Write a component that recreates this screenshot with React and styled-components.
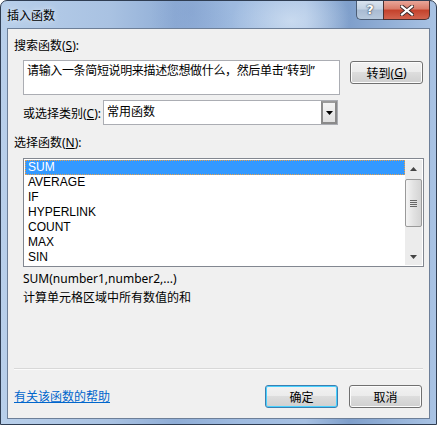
import React from 'react'
import styled, { createGlobalStyle } from 'styled-components'

const GlobalStyle = createGlobalStyle`
    html, body {
        margin: 0;
        padding: 0;
        background: #ffffff;
    }
    body {
        font-family: "Noto Sans", "Noto Sans CJK SC", sans-serif;
        font-size: 12px;
        color: #000;
    }
`

const functions = ['SUM', 'AVERAGE', 'IF', 'HYPERLINK', 'COUNT', 'MAX', 'SIN']

const Key = ({ children }) => <u>{children}</u>

const App = () => {
    return (
        <>
            <GlobalStyle />
            <Window>
                <TitleBar>
                    <Title>插入函数</Title>
                    <Caption>
                        <HelpButton>?</HelpButton>
                        <CloseButton>
                            <svg width="14" height="11" viewBox="0 0 14 11">
                                <path d="M2 1.5 L12 9.5 M12 1.5 L2 9.5" stroke="#3a2a2a" strokeWidth="4" strokeLinecap="square" />
                                <path d="M2 1.5 L12 9.5 M12 1.5 L2 9.5" stroke="#ffffff" strokeWidth="2.2" strokeLinecap="square" />
                            </svg>
                        </CloseButton>
                    </Caption>
                </TitleBar>
                <Client>
                    <Label>搜索函数(<Key>S</Key>):</Label>
                    <SearchRow>
                        <SearchBox>请输入一条简短说明来描述您想做什么，然后单击“转到”</SearchBox>
                        <Button>转到(<Key>G</Key>)</Button>
                    </SearchRow>
                    <CategoryRow>
                        <span>或选择类别(<Key>C</Key>):</span>
                        <Select>
                            <SelectText>常用函数</SelectText>
                            <DropButton>
                                <svg width="7" height="4" viewBox="0 0 7 4">
                                    <path d="M0 0 H7 L3.5 4 Z" fill="#000" />
                                </svg>
                            </DropButton>
                        </Select>
                    </CategoryRow>
                    <Label gap={10}>选择函数(<Key>N</Key>):</Label>
                    <ListBox>
                        <Items>
                            {functions.map((f, i) => (
                                <Item key={f} selected={i === 0}>{f}</Item>
                            ))}
                        </Items>
                        <ScrollBar>
                            <Arrow>
                                <svg width="7" height="4" viewBox="0 0 7 4"><path d="M0 4 H7 L3.5 0 Z" fill="#444" /></svg>
                            </Arrow>
                            <Track>
                                <Thumb>
                                    <Grip /><Grip /><Grip /><Grip />
                                </Thumb>
                            </Track>
                            <Arrow>
                                <svg width="7" height="4" viewBox="0 0 7 4"><path d="M0 0 H7 L3.5 4 Z" fill="#444" /></svg>
                            </Arrow>
                        </ScrollBar>
                    </ListBox>
                    <Syntax>SUM(number1,number2,...)</Syntax>
                    <Description>计算单元格区域中所有数值的和</Description>
                    <Separator />
                    <Footer>
                        <HelpLink href="#">有关该函数的帮助</HelpLink>
                        <Buttons>
                            <Button primary>确定</Button>
                            <Button>取消</Button>
                        </Buttons>
                    </Footer>
                </Client>
            </Window>
        </>
    )
}

export default App

const Window = styled.div`
    width: 437px;
    height: 425px;
    box-sizing: border-box;
    border: 1px solid #2f3d52;
    border-radius: 7px 7px 0 0;
    padding: 0 6px 5px 6px;
    display: flex;
    flex-direction: column;
    background:
        radial-gradient(ellipse 60px 40px at 290px 20px, rgba(230,240,250,0.55), rgba(230,240,250,0) 100%),
        radial-gradient(ellipse 40px 60px at 190px 10px, rgba(120,150,200,0.35), rgba(120,150,200,0) 100%),
        linear-gradient(90deg, #b8cfea 0%, #a9c2e2 25%, #8fadd6 40%, #9fbbe0 55%, #a6c0e2 70%, #7f9fcb 80%, #a9c3e4 100%);
    overflow: hidden;
`

const TitleBar = styled.div`
    height: 27px;
    display: flex;
    align-items: flex-start;
    justify-content: space-between;
`

const Title = styled.div`
    margin-top: 5px;
    font-family: "Noto Sans CJK SC", sans-serif;
    font-size: 12px;
    color: #000;
    text-shadow: 0 0 6px rgba(255,255,255,0.9);
`

const Caption = styled.div`
    display: flex;
`

const HelpButton = styled.div`
    width: 27px;
    height: 19px;
    box-sizing: border-box;
    border: 1px solid #4b5c74;
    border-top: none;
    border-right: none;
    border-radius: 0 0 0 5px;
    background: linear-gradient(#d9e3ef 0%, #c4d2e3 45%, #a9bbd2 50%, #b8c9dd 100%);
    color: #fff;
    font-family: "DejaVu Sans", sans-serif;
    font-weight: bold;
    font-size: 13px;
    line-height: 18px;
    text-align: center;
    text-shadow: 0 0 2px #2a3548, 0 0 1px #2a3548;
`

const CloseButton = styled.div`
    width: 47px;
    height: 19px;
    box-sizing: border-box;
    border: 1px solid #4b3030;
    border-top: none;
    border-radius: 0 0 5px 0;
    background: linear-gradient(#e8a699 0%, #d97a68 45%, #c4412b 50%, #d2644f 100%);
    display: flex;
    align-items: center;
    justify-content: center;
`

const Client = styled.div`
    flex: 1;
    box-sizing: border-box;
    background: #f0f0f0;
    border: 1px solid #6d7f98;
    padding: 9px 6px 0 6px;
    display: flex;
    flex-direction: column;
    font-family: "Noto Sans", "Noto Sans CJK SC", sans-serif;
    font-size: 12px;
`

const Label = styled.div`
    margin-top: ${p => p.gap || 0}px;
    height: 16px;
    line-height: 16px;
`

const SearchRow = styled.div`
    margin-top: 6px;
    margin-left: 9px;
    display: flex;
    align-items: flex-start;
    gap: 10px;
`

const SearchBox = styled.div`
    width: 317px;
    height: 35px;
    box-sizing: border-box;
    background: #fff;
    border: 1px solid #abadb3;
    padding: 2px 3px;
    line-height: 16px;
    letter-spacing: -0.35px;
    white-space: nowrap;
    overflow: hidden;
`

const Button = styled.div`
    width: 73px;
    height: 23px;
    margin-top: 1px;
    box-sizing: border-box;
    border: 1px solid ${p => (p.primary ? '#3c7fb1' : '#707070')};
    border-radius: 3px;
    background: linear-gradient(#f2f2f2 0%, #ebebeb 49%, #dddddd 50%, #cfcfcf 100%);
    box-shadow: inset 0 0 0 1px ${p => (p.primary ? '#48d1ff' : '#fcfcfc')};
    display: flex;
    align-items: center;
    justify-content: center;
    font-family: "Noto Sans", "Noto Sans CJK SC", sans-serif;
    font-size: 12px;
`

const CategoryRow = styled.div`
    margin-top: 5px;
    margin-left: 9px;
    display: flex;
    align-items: center;
    gap: 2px;
`

const Select = styled.div`
    width: 235px;
    height: 25px;
    box-sizing: border-box;
    background: #fff;
    border: 1px solid #abadb3;
    display: flex;
    align-items: stretch;
`

const SelectText = styled.div`
    flex: 1;
    padding-left: 3px;
    line-height: 22px;
`

const DropButton = styled.div`
    width: 16px;
    box-sizing: border-box;
    border: 2px solid #8a8a8a;
    border-top-color: #9a9a9a;
    background: linear-gradient(#f4f4f4, #e0e0e0);
    display: flex;
    align-items: center;
    justify-content: center;
`

const ListBox = styled.div`
    margin-top: 7px;
    margin-left: 9px;
    width: 401px;
    height: 109px;
    box-sizing: border-box;
    background: #fff;
    border: 1px solid #828790;
    display: flex;
    padding: 1px;
`

const Items = styled.div`
    flex: 1;
    display: flex;
    flex-direction: column;
`

const Item = styled.div`
    height: 15px;
    line-height: 15px;
    box-sizing: border-box;
    padding-left: 3px;
    font-family: "Liberation Sans", sans-serif;
    font-size: 12px;
    color: ${p => (p.selected ? '#fff' : '#000')};
    background: ${p => (p.selected ? '#3399ff' : 'transparent')};
    outline: ${p => (p.selected ? '1px dotted #e8a04a' : 'none')};
    outline-offset: -1px;
`

const ScrollBar = styled.div`
    width: 17px;
    background: #ececec;
    display: flex;
    flex-direction: column;
`

const Arrow = styled.div`
    height: 17px;
    display: flex;
    align-items: center;
    justify-content: center;
`

const Track = styled.div`
    flex: 1;
    padding-top: 2px;
`

const Thumb = styled.div`
    height: 48px;
    box-sizing: border-box;
    border: 1px solid #9a9a9a;
    border-radius: 2px;
    background: linear-gradient(90deg, #f4f4f4, #e2e2e2 50%, #d4d4d4);
    display: flex;
    flex-direction: column;
    align-items: center;
    justify-content: center;
    gap: 1px;
`

const Grip = styled.div`
    width: 7px;
    height: 1px;
    background: #666;
`

const Syntax = styled.div`
    margin-top: 4px;
    margin-left: 9px;
    line-height: 16px;
`

const Description = styled.div`
    margin-top: 3px;
    margin-left: 9px;
    line-height: 16px;
`

const Separator = styled.div`
    margin-top: 62px;
    height: 1px;
    background: #d8d8d8;
    border-bottom: 1px solid #fbfbfb;
`

const Footer = styled.div`
    margin-top: 14px;
    display: flex;
    align-items: center;
    justify-content: space-between;
`

const HelpLink = styled.a`
    color: #0066cc;
    text-decoration: underline;
    font-size: 12px;
`

const Buttons = styled.div`
    display: flex;
    gap: 11px;
    margin-right: 1px;
`
